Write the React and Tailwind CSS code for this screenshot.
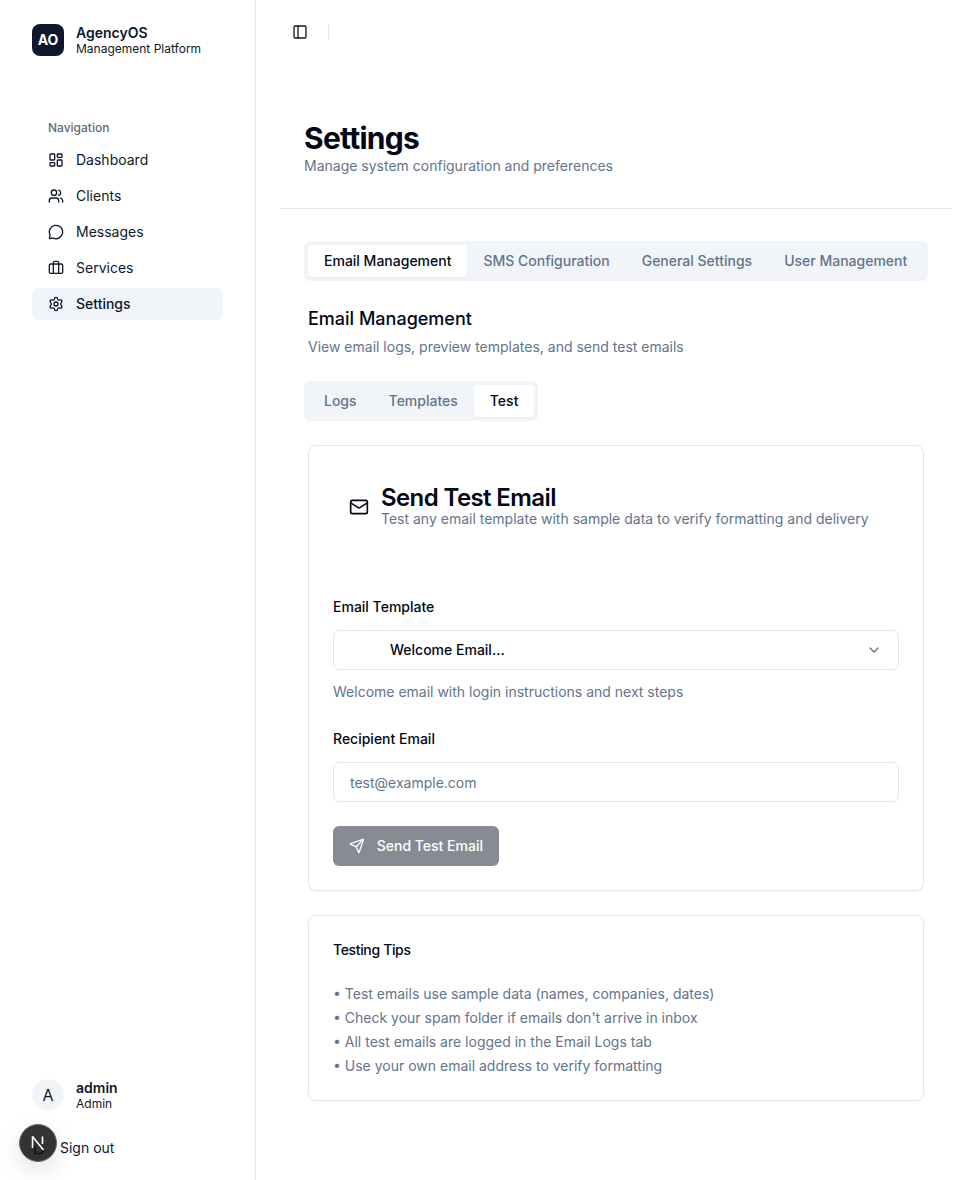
import React from 'react';
import { LayoutDashboard, Users, MessageCircle, Briefcase, Settings, PanelLeft, Mail, Send, ChevronDown, LogOut } from 'lucide-react';

const navItems = [
  { label: 'Dashboard', icon: LayoutDashboard },
  { label: 'Clients', icon: Users },
  { label: 'Messages', icon: MessageCircle },
  { label: 'Services', icon: Briefcase },
  { label: 'Settings', icon: Settings, active: true },
];

const mainTabs = ['Email Management', 'SMS Configuration', 'General Settings', 'User Management'];
const subTabs = ['Logs', 'Templates', 'Test'];

const tips = [
  'Test emails use sample data (names, companies, dates)',
  "Check your spam folder if emails don't arrive in inbox",
  'All test emails are logged in the Email Logs tab',
  'Use your own email address to verify formatting',
];

const TabButton = ({ label, active }) => (
  <div
    className={`flex h-8 items-center rounded-sm px-4 text-sm font-medium ${
      active ? 'bg-white text-[#020817] shadow-xs' : 'text-[#64748b]'
    }`}
  >
    {label}
  </div>
);

const Sidebar = () => (
  <aside className="flex h-[1180px] w-[256px] shrink-0 flex-col border-r border-[#e2e8f0] bg-white">
    {/* Brand */}
    <div className="ml-8 mt-6 flex h-8 items-start gap-3">
      <div className="flex h-8 w-8 items-center justify-center rounded-lg bg-[#0f172a] text-sm font-bold text-white">
        AO
      </div>
      <div className="pt-px">
        <div className="text-sm font-semibold leading-4 text-[#0f172a]">AgencyOS</div>
        <div className="text-xs leading-4 text-[#0f172a]">Management Platform</div>
      </div>
    </div>

    {/* Navigation */}
    <div className="ml-8 mr-8 mt-[56px]">
      <div className="flex h-8 items-center px-4 text-xs font-medium text-[#5f6b7c]">Navigation</div>
      <nav>
        {navItems.map(({ label, icon: Icon, active }) => (
          <div
            key={label}
            className={`flex h-8 items-center gap-3 rounded-md px-4 mb-1 text-sm text-[#0f172a] ${active ? 'bg-[#f1f5f9] font-medium' : ''}`}
          >
            <Icon className="h-4 w-4" />
            <span>{label}</span>
          </div>
        ))}
      </nav>
    </div>

    {/* User */}
    <div className="ml-8 mt-auto">
      <div className="flex h-8 items-start gap-3">
        <div className="flex h-8 w-8 items-center justify-center rounded-full bg-[#f1f5f9] text-base text-[#0f172a]">A</div>
        <div className="pt-px">
          <div className="text-sm font-semibold leading-4 text-[#0f172a]">admin</div>
          <div className="text-xs leading-4 text-[#0f172a]">Admin</div>
        </div>
      </div>
      <div className="mb-[16px] ml-1 mt-[21px] flex h-[32px] items-center gap-2 text-sm text-[#0f172a]">
        <LogOut className="h-4 w-4" />
        <span>Sign out</span>
      </div>
    </div>
  </aside>
);

const DevIndicator = () => (
  <div className="fixed left-[19px] top-[1124px] flex h-[38px] w-[38px] items-center justify-center rounded-full border border-[#6a6a6a] bg-[#333333] shadow-[0_8px_24px_rgba(0,0,0,0.12)]">
    <svg viewBox="0 0 20 20" className="h-5 w-5 overflow-visible" fill="none">
      <path d="M7 13L7 20.5H13L16 17" stroke="#111" strokeWidth="1.6" />
      <path d="M4.5 3.5V15" stroke="#fff" strokeWidth="1.6" />
      <path d="M4.5 3.5L15.5 17" stroke="#fff" strokeWidth="1.6" />
      <path d="M14.5 3.5V11" stroke="#fff" strokeWidth="1.6" />
    </svg>
  </div>
);

const TestEmailCard = () => (
  <div className="mt-6 rounded-lg border border-[#e2e8f0] bg-white p-6 shadow-xs">
    <div className="flex h-[74px] items-center gap-3 px-4">
      <Mail className="h-5 w-5 text-[#020817]" />
      <div className="pt-px">
        <div className="text-2xl font-semibold leading-6 tracking-tight text-[#020817]">Send Test Email</div>
        <div className="-mt-px text-sm leading-5 text-[#64748b]">Test any email template with sample data to verify formatting and delivery</div>
      </div>
    </div>

    <div className="mt-[53px] text-sm font-medium leading-5 text-[#020817]">Email Template</div>
    <div className="mt-[13px] flex h-10 items-center justify-between rounded-md border border-[#e2e8f0] bg-white pl-[56px] pr-4 text-sm font-medium text-[#020817]">
      <span>Welcome Email...</span>
      <ChevronDown className="h-4 w-4 text-[#64748b]" />
    </div>
    <div className="mt-3 text-sm leading-5 text-[#64748b]">Welcome email with login instructions and next steps</div>

    <div className="mt-[27px] text-sm font-medium leading-5 text-[#020817]">Recipient Email</div>
    <input
      readOnly
      placeholder="test@example.com"
      className="mt-[13px] block h-10 w-full rounded-md border border-[#e2e8f0] bg-white px-4 text-sm placeholder:text-[#64748b]"
    />
    <div className="mt-6 flex h-10 w-[166px] items-center gap-3 whitespace-nowrap rounded-md bg-[#878b93] px-4 text-sm font-medium text-white">
      <Send className="h-4 w-4" />
      <span>Send Test Email</span>
    </div>
  </div>
);

const TipsCard = () => (
  <div className="mt-6 rounded-lg border border-[#e2e8f0] bg-white px-6 pb-[22px] pt-6 shadow-xs">
    <div className="text-sm font-medium leading-5 tracking-tight text-[#020817]">Testing Tips</div>
    <ul className="mt-[22px] text-sm leading-6 text-[#64748b]">
      {tips.map((tip) => (
        <li key={tip}>• {tip}</li>
      ))}
    </ul>
  </div>
);

export default function App() {
  return (
    <div className="flex h-[1180px] overflow-hidden bg-white font-['Inter',sans-serif]">
      <Sidebar />
      <main className="min-w-0 flex-1 pl-6 pr-6">
        {/* Top bar */}
        <div className="flex h-16 items-center">
          <PanelLeft className="ml-3 h-4 w-4 text-[#0f172a]" />
          <div className="ml-5 h-4 w-px bg-[#e2e8f0]" />
        </div>

        {/* Page title */}
        <div className="border-b border-[#e2e8f0] px-6 pb-8 pt-14">
          <h1 className="text-3xl font-bold leading-9 tracking-tight text-[#020817]">Settings</h1>
          <p className="text-sm leading-5 text-[#64748b]">Manage system configuration and preferences</p>
        </div>

        <div className="px-6 pt-8">
          <div className="flex h-10 items-center rounded-md bg-[#f1f5f9] p-1">
            {mainTabs.map((tab, i) => (
              <TabButton key={tab} label={tab} active={i === 0} />
            ))}
          </div>

          <div className="mt-6 px-1">
            <h2 className="text-lg font-medium leading-7 text-[#020817]">Email Management</h2>
            <p className="mt-1 text-sm leading-5 text-[#64748b]">View email logs, preview templates, and send test emails</p>
          </div>

          <div className="mt-6 flex h-10 w-fit items-center rounded-md bg-[#f1f5f9] p-1">
            {subTabs.map((tab) => (
              <TabButton key={tab} label={tab} active={tab === 'Test'} />
            ))}
          </div>

          <div className="px-1">
            <TestEmailCard />
            <TipsCard />
          </div>
        </div>
      </main>
      <DevIndicator />
    </div>
  );
}
